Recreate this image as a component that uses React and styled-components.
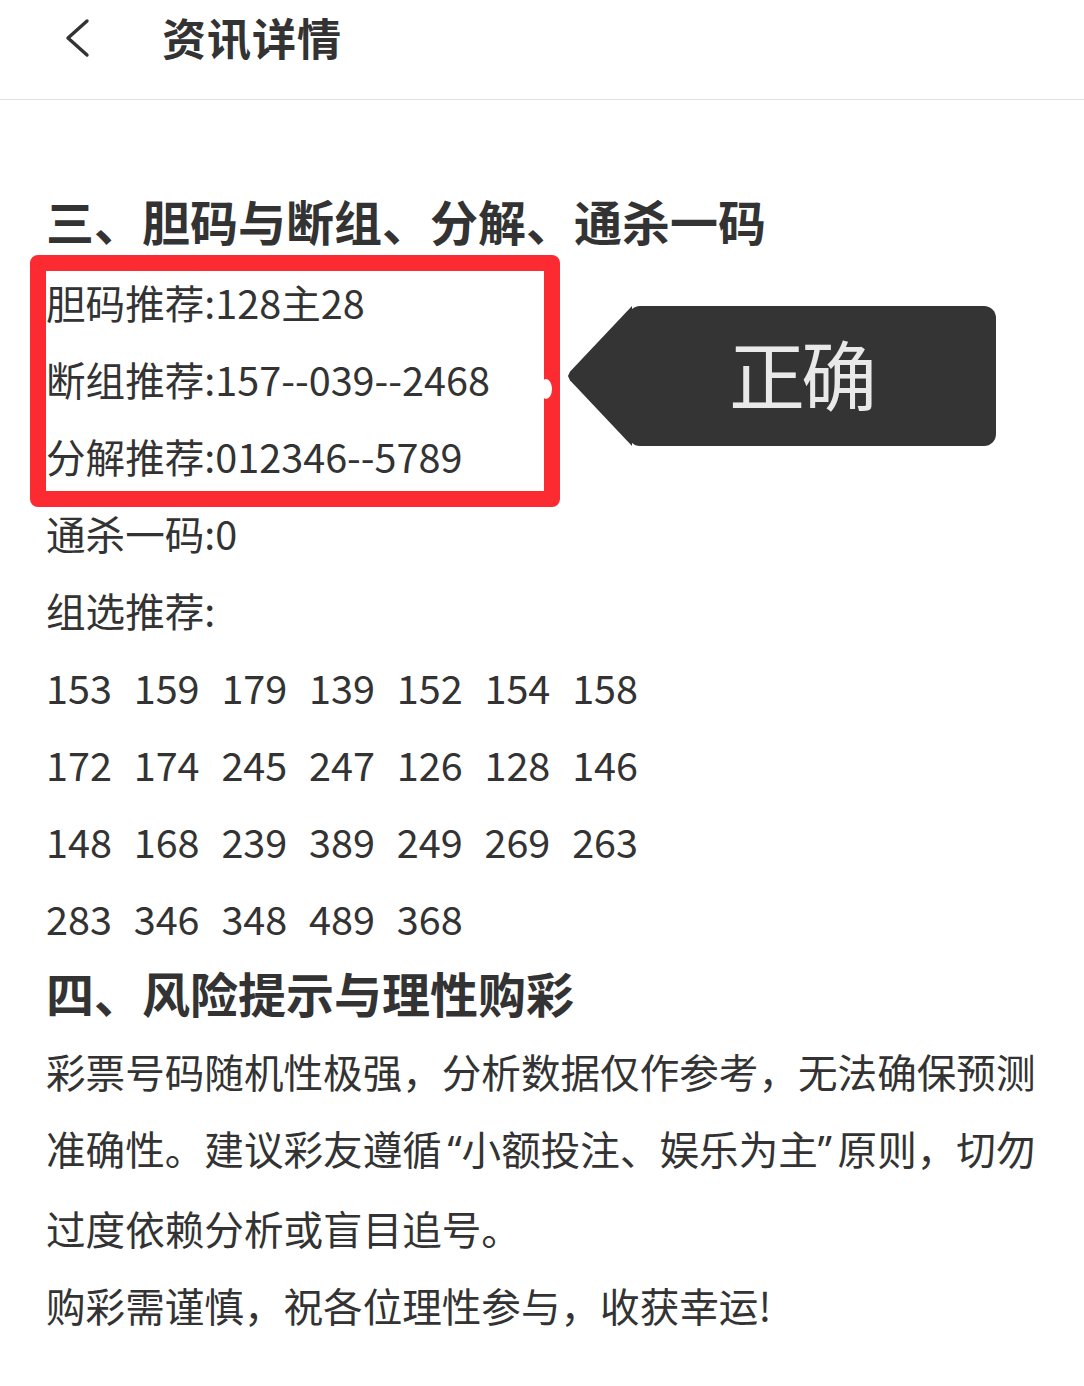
import React from 'react';
import styled, { createGlobalStyle } from 'styled-components';

const GlobalStyle = createGlobalStyle`
  html, body {
    margin: 0;
    padding: 0;
    background: #ffffff;
  }
  body {
    font-family: "Noto Sans CJK SC", "Noto Sans", sans-serif;
    color: #333333;
  }
`;

const Page = styled.div`
  width: 1084px;
  min-height: 1386px;
  background: #ffffff;
`;

const Header = styled.header`
  height: 100px;
  display: flex;
  align-items: center;
  border-bottom: 1px solid #e2e2e2;
  box-sizing: border-box;
`;

const BackButton = styled.button`
  width: 162px;
  height: 100px;
  padding: 0 0 0 63px;
  border: none;
  background: none;
  display: flex;
  align-items: center;
  margin-top: -24px;
  cursor: pointer;
`;

const HeaderTitle = styled.h1`
  margin: -26px 0 0;
  font-size: 44px;
  font-weight: 700;
  color: #333333;
  letter-spacing: 1px;
`;

const Content = styled.main`
  padding: 0 46px;
`;

const SectionTitle = styled.h2`
  margin: ${(p) => p.$top || 0}px 0 ${(p) => p.$bottom || 0}px;
  font-size: 48px;
  font-weight: 700;
  line-height: ${(p) => p.$lh || 80}px;
  color: #333333;
  white-space: nowrap;
`;

const Line = styled.p`
  margin: 0;
  font-size: 39.6px;
  line-height: 77px;
  color: #333333;
  white-space: nowrap;
`;

const Highlight = styled.div`
  position: relative;
`;

const RedBox = styled.div`
  position: absolute;
  left: -16px;
  top: -8px;
  width: 530px;
  height: 252px;
  border: 16px solid #fc2b31;
  border-radius: 8px;
  box-sizing: border-box;
  pointer-events: none;

  &::after {
    content: '';
    position: absolute;
    right: -8px;
    top: 108px;
    width: 12px;
    height: 20px;
    border-radius: 50%;
    background: #ffffff;
  }
`;

const Callout = styled.div`
  position: absolute;
  left: 582px;
  top: 43px;
  width: 368px;
  height: 140px;
  background: #343434;
  border-radius: 12px;
  display: flex;
  align-items: center;
  justify-content: center;
  padding: 0 22px 8px 0;
  box-sizing: border-box;
  color: #e9e9e9;
  font-size: 76px;
  line-height: 1;
  letter-spacing: -4px;

  &::before {
    content: '';
    position: absolute;
    left: -60px;
    top: 0;
    width: 64px;
    height: 140px;
    background: #343434;
    clip-path: polygon(100% 0, 3% 47%, 0 50%, 3% 53%, 100% 100%);
  }
`;

const NumberRow = styled.div`
  display: grid;
  grid-template-columns: repeat(7, 87.7px);
  font-size: 39.6px;
  line-height: 77px;
  color: #333333;
`;

const Paragraph = styled.p`
  margin: ${(p) => p.$top || 0}px 0 0;
  font-size: 39.6px;
  line-height: 77px;
  color: #333333;
  white-space: nowrap;
`;

const Quote = styled.span`
  display: inline-block;
  width: 0.5em;
  text-align: ${(p) => p.$align};
  font-family: "Noto Sans", "Liberation Sans", sans-serif;
`;

const groups = [
  ['153', '159', '179', '139', '152', '154', '158'],
  ['172', '174', '245', '247', '126', '128', '146'],
  ['148', '168', '239', '389', '249', '269', '263'],
  ['283', '346', '348', '489', '368'],
];

const BackIcon = () => (
  <svg width="30" height="40" viewBox="0 0 30 40">
    <polyline
      points="24,3 5,20 24,37"
      fill="none"
      stroke="#333333"
      strokeWidth="3.4"
      strokeLinecap="round"
      strokeLinejoin="round"
    />
  </svg>
);

export default function App() {
  return (
    <Page>
      <GlobalStyle />
      <Header>
        <BackButton aria-label="返回">
          <BackIcon />
        </BackButton>
        <HeaderTitle>资讯详情</HeaderTitle>
      </Header>
      <Content>
        <SectionTitle $top={80} $bottom={3}>
          三、胆码与断组、分解、通杀一码
        </SectionTitle>
        <Highlight>
          <Line>胆码推荐:128主28</Line>
          <Line>断组推荐:157--039--2468</Line>
          <Line>分解推荐:012346--5789</Line>
          <RedBox />
          <Callout>正确</Callout>
        </Highlight>
        <Line>通杀一码:0</Line>
        <Line>组选推荐:</Line>
        {groups.map((row, i) => (
          <NumberRow key={i}>
            {row.map((n, j) => (
              <span key={j}>{n}</span>
            ))}
          </NumberRow>
        ))}
        <SectionTitle $lh={72}>四、风险提示与理性购彩</SectionTitle>
        <Paragraph $top={4}>
          彩票号码随机性极强，分析数据仅作参考，无法确保预测
          <br />
          准确性。建议彩友遵循<Quote $align="right">“</Quote>小额投注、娱乐为主
          <Quote $align="left">”</Quote>原则，切勿
          <br />
          过度依赖分析或盲目追号。
        </Paragraph>
        <Paragraph>购彩需谨慎，祝各位理性参与，收获幸运!</Paragraph>
      </Content>
    </Page>
  );
}
